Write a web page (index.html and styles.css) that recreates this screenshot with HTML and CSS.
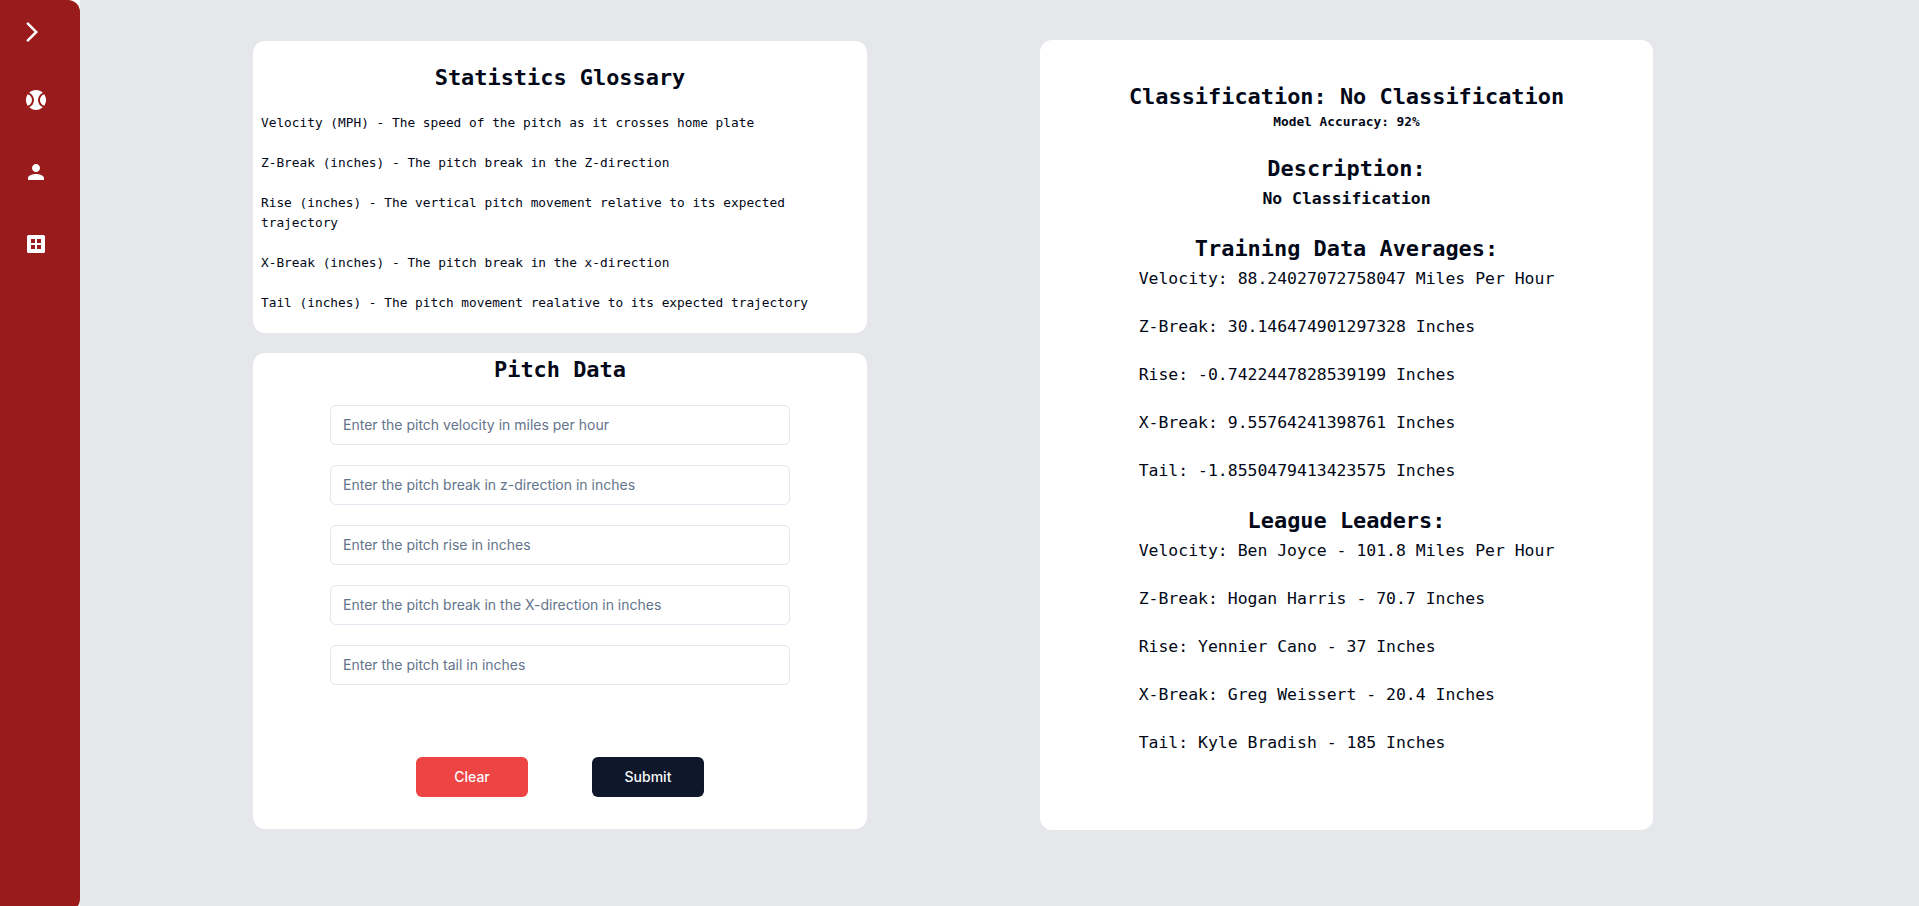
FILE: index.html
```html
<!DOCTYPE html>
<html lang="en">
<head>
<meta charset="utf-8">
<title>Pitch Classifier</title>
<link rel="stylesheet" href="styles.css">
</head>
<body>
<div class="app">
  <nav class="sidebar">
    <svg class="icon icon-toggle" viewBox="0 0 24 24"><path d="M6.23 20.23 8 22l10-10L8 2 6.23 3.77 14.46 12z"/></svg>
    <svg class="icon" viewBox="0 0 24 24"><path d="M3.81 6.28C2.67 7.9 2 9.87 2 12s.67 4.1 1.81 5.72C6.23 16.95 8 14.68 8 12S6.23 7.05 3.81 6.28zM20.19 6.28C17.77 7.05 16 9.32 16 12s1.77 4.95 4.19 5.72C21.33 16.1 22 14.13 22 12s-.67-4.1-1.81-5.72z"/><path d="M14 12c0-3.28 1.97-6.09 4.79-7.33C17.01 3.02 14.63 2 12 2S6.99 3.02 5.21 4.67C8.03 5.91 10 8.72 10 12s-1.97 6.09-4.79 7.33C6.99 20.98 9.37 22 12 22s5.01-1.02 6.79-2.67C15.97 18.09 14 15.28 14 12z"/></svg>
    <svg class="icon" viewBox="0 0 24 24"><path d="M12 12c2.21 0 4-1.79 4-4s-1.79-4-4-4-4 1.79-4 4 1.79 4 4 4zm0 2c-2.67 0-8 1.34-8 4v2h16v-2c0-2.66-5.33-4-8-4z"/></svg>
    <svg class="icon" viewBox="0 0 24 24"><path fill-rule="evenodd" d="M4.5 3h15A1.5 1.5 0 0 1 21 4.500v15a1.500 1.500 0 0 1-1.500 1.500h-15A1.500 1.500 0 0 1 3 19.500v-15A1.500 1.500 0 0 1 4.500 3zM7 7v4h4V7zM13 7v4h4V7zM7 13v4h4v-4zM13 13v4h4v-4z"/></svg>
  </nav>
  <main class="content">
    <div class="column">
      <section class="card glossary">
        <h1 class="title">Statistics Glossary</h1>
        <div class="terms">
          <p>Velocity (MPH) - The speed of the pitch as it crosses home plate</p>
          <p>Z-Break (inches) - The pitch break in the Z-direction</p>
          <p>Rise (inches) - The vertical pitch movement relative to its expected trajectory</p>
          <p>X-Break (inches) - The pitch break in the x-direction</p>
          <p>Tail (inches) - The pitch movement realative to its expected trajectory</p>
        </div>
      </section>
      <form class="card pitch">
        <h1 class="title">Pitch Data</h1>
        <div class="fields">
          <input class="field" placeholder="Enter the pitch velocity in miles per hour">
          <input class="field" placeholder="Enter the pitch break in z-direction in inches">
          <input class="field" placeholder="Enter the pitch rise in inches">
          <input class="field" placeholder="Enter the pitch break in the X-direction in inches">
          <input class="field" placeholder="Enter the pitch tail in inches">
        </div>
        <div class="actions">
          <button type="button" class="button clear">Clear</button>
          <button type="button" class="button submit">Submit</button>
        </div>
      </form>
    </div>
    <section class="card results">
      <h1 class="title">Classification: No Classification</h1>
      <p class="accuracy">Model Accuracy: 92%</p>
      <h1 class="title">Description:</h1>
      <p class="description">No Classification</p>
      <h1 class="title">Training Data Averages:</h1>
      <div class="stats">
        <p>Velocity: 88.24027072758047 Miles Per Hour</p>
        <p>Z-Break: 30.146474901297328 Inches</p>
        <p>Rise: -0.7422447828539199 Inches</p>
        <p>X-Break: 9.55764241398761 Inches</p>
        <p>Tail: -1.8550479413423575 Inches</p>
      </div>
      <h1 class="title">League Leaders:</h1>
      <div class="stats">
        <p>Velocity: Ben Joyce - 101.8 Miles Per Hour</p>
        <p>Z-Break: Hogan Harris - 70.7 Inches</p>
        <p>Rise: Yennier Cano - 37 Inches</p>
        <p>X-Break: Greg Weissert - 20.4 Inches</p>
        <p>Tail: Kyle Bradish - 185 Inches</p>
      </div>
    </section>
  </main>
</div>
</body>
</html>
```
FILE: styles.css
```css
* { box-sizing: border-box; margin: 0; padding: 0; }

body {
  background: #fff;
  color: #020817;
  font-family: Consolas, "DejaVu Sans Mono", monospace;
  overflow: hidden;
}

.app { display: flex; height: 911px; }

.sidebar {
  flex: none;
  width: 80px;
  display: flex;
  flex-direction: column;
  gap: 48px;
  padding: 20px 0 0 24px;
  background: #991b1b;
  border-radius: 0 12px 12px 0;
}

.icon { width: 24px; height: 24px; fill: #fff; flex: none; }
.icon-toggle { margin: 0 0 -4px -4px; }

.content {
  flex: 1;
  display: flex;
  align-items: flex-start;
  gap: 173px;
  padding: 40px 0 0 173px;
  background: #e5e7eb;
}

.column {
  display: flex;
  flex-direction: column;
  gap: 20px;
  width: 614px;
  padding-top: 1px;
}

.card { background: #fff; border-radius: 12px; }

.title {
  font-size: 21.92px;
  line-height: 32px;
  font-weight: 700;
  text-align: center;
}

.glossary { height: 292px; padding: 21px 8px 0; }

.terms {
  display: flex;
  flex-direction: column;
  gap: 20px;
  margin-top: 19px;
  font-size: 12.8px;
  line-height: 20px;
}

.pitch { height: 476px; padding-top: 1px; }

.fields {
  display: flex;
  flex-direction: column;
  gap: 20px;
  padding: 19px 77px 0;
}

.field {
  width: 100%;
  height: 40px;
  padding: 8px 12px 10px;
  border: 1px solid #e2e8f0;
  border-radius: 6px;
  background: #fff;
  font: 400 14px/20px Inter, sans-serif;
}

.field::placeholder { color: #64748b; opacity: 1; }

.actions {
  display: flex;
  justify-content: center;
  gap: 64px;
  margin-top: 72px;
}

.button {
  width: 112px;
  height: 40px;
  border: 0;
  border-radius: 6px;
  color: #f8fafc;
  font: 500 14px/20px Inter, sans-serif;
}

.clear { background: #ef4444; }
.submit { background: #0f172a; }

.results {
  display: flex;
  flex-direction: column;
  align-items: center;
  width: 613px;
  height: 790px;
  padding-top: 41px;
}

.accuracy {
  margin-bottom: 22px;
  font-size: 12.8px;
  line-height: 18px;
  font-weight: 700;
}

.description {
  margin-bottom: 20px;
  font-size: 16.44px;
  line-height: 28px;
  font-weight: 700;
}

.stats {
  display: flex;
  flex-direction: column;
  gap: 20px;
  margin-bottom: 20px;
  font-size: 16.44px;
  line-height: 28px;
}
```
